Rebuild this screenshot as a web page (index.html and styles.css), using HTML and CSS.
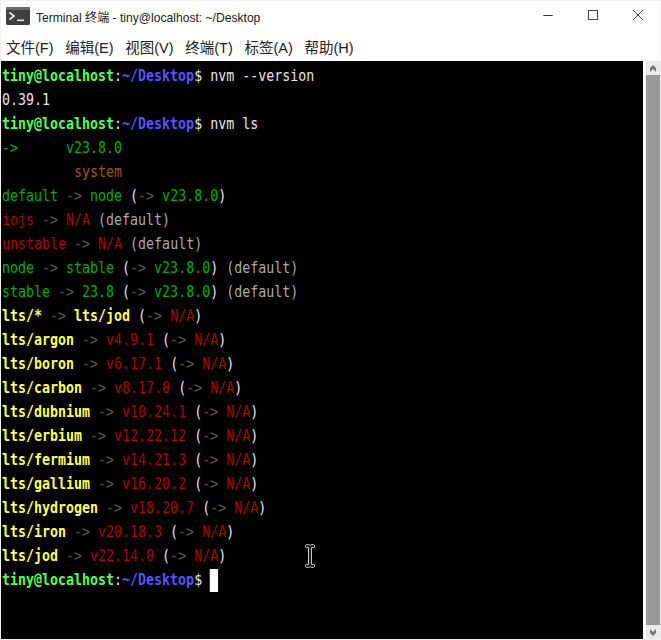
FILE: index.html
```html
<!DOCTYPE html>
<html lang="zh">
<head>
<meta charset="utf-8">
<title>Terminal 终端 - tiny@localhost: ~/Desktop</title>
<link rel="stylesheet" href="styles.css">
</head>
<body>
<div class="window">
  <header class="titlebar">
    <svg class="app-icon" width="24" height="18" viewBox="0 0 24 18">
      <rect width="24" height="18" rx="1.5" fill="#3f3f3f"/>
      <path d="M0 3V1.5A1.5 1.5 0 0 1 1.5 0H22.500A1.500 1.500 0 0 1 24 1.500V3z" fill="#6a6a6a"/>
      <path d="M3.500 5.500L8 9l-4.500 3.500" fill="none" stroke="#e4e4e4" stroke-width="1.800"/>
      <rect x="11" y="12.500" width="7" height="1.600" fill="#e4e4e4"/>
    </svg>
    <span class="title">Terminal 终端 - tiny@localhost: ~/Desktop</span>
    <div class="controls">
      <svg class="ctl" width="12" height="12" viewBox="0 0 12 12"><path d="M1.300 6.500h9.400" stroke="#333" stroke-width="1"/></svg>
      <svg class="ctl" width="12" height="12" viewBox="0 0 12 12"><rect x="1.500" y="1.500" width="9" height="9" fill="none" stroke="#444" stroke-width="1"/></svg>
      <svg class="ctl" width="12" height="12" viewBox="0 0 12 12"><path d="M1 1l10 10M11 1L1 11" stroke="#444" stroke-width="1"/></svg>
    </div>
  </header>
  <nav class="menubar">
    <span>文件(F)</span><span>编辑(E)</span><span>视图(V)</span><span>终端(T)</span><span>标签(A)</span><span>帮助(H)</span>
  </nav>
  <div class="body">
    <div class="term">
    <pre class="lines"><span class="pg">tiny@localhost</span>:<span class="pb">~/Desktop</span>$ nvm --version
0.39.1
<span class="pg">tiny@localhost</span>:<span class="pb">~/Desktop</span>$ nvm ls
<span class="g">-&gt;</span>      <span class="g">v23.8.0</span>
         <span class="o">system</span>
<span class="g">default</span> <span class="d">-&gt;</span> <span class="g">node</span> (<span class="d">-&gt;</span> <span class="g">v23.8.0</span>)
<span class="r">iojs</span> <span class="d">-&gt;</span> <span class="r">N/A</span> <span class="m">(default)</span>
<span class="r">unstable</span> <span class="d">-&gt;</span> <span class="r">N/A</span> <span class="m">(default)</span>
<span class="g">node</span> <span class="d">-&gt;</span> <span class="g">stable</span> (<span class="d">-&gt;</span> <span class="g">v23.8.0</span>) <span class="m">(default)</span>
<span class="g">stable</span> <span class="d">-&gt;</span> <span class="g">23.8</span> (<span class="d">-&gt;</span> <span class="g">v23.8.0</span>) <span class="m">(default)</span>
<span class="y">lts/*</span> <span class="d">-&gt;</span> <span class="y">lts/jod</span> (<span class="d">-&gt;</span> <span class="r">N/A</span>)
<span class="y">lts/argon</span> <span class="d">-&gt;</span> <span class="r">v4.9.1</span> (<span class="d">-&gt;</span> <span class="r">N/A</span>)
<span class="y">lts/boron</span> <span class="d">-&gt;</span> <span class="r">v6.17.1</span> (<span class="d">-&gt;</span> <span class="r">N/A</span>)
<span class="y">lts/carbon</span> <span class="d">-&gt;</span> <span class="r">v8.17.0</span> (<span class="d">-&gt;</span> <span class="r">N/A</span>)
<span class="y">lts/dubnium</span> <span class="d">-&gt;</span> <span class="r">v10.24.1</span> (<span class="d">-&gt;</span> <span class="r">N/A</span>)
<span class="y">lts/erbium</span> <span class="d">-&gt;</span> <span class="r">v12.22.12</span> (<span class="d">-&gt;</span> <span class="r">N/A</span>)
<span class="y">lts/fermium</span> <span class="d">-&gt;</span> <span class="r">v14.21.3</span> (<span class="d">-&gt;</span> <span class="r">N/A</span>)
<span class="y">lts/gallium</span> <span class="d">-&gt;</span> <span class="r">v16.20.2</span> (<span class="d">-&gt;</span> <span class="r">N/A</span>)
<span class="y">lts/hydrogen</span> <span class="d">-&gt;</span> <span class="r">v18.20.7</span> (<span class="d">-&gt;</span> <span class="r">N/A</span>)
<span class="y">lts/iron</span> <span class="d">-&gt;</span> <span class="r">v20.18.3</span> (<span class="d">-&gt;</span> <span class="r">N/A</span>)
<span class="y">lts/jod</span> <span class="d">-&gt;</span> <span class="r">v22.14.0</span> (<span class="d">-&gt;</span> <span class="r">N/A</span>)
<span class="pg">tiny@localhost</span>:<span class="pb">~/Desktop</span>$ <span class="cursor"></span></pre>
    </div>
    <svg class="ibeam" width="10" height="24" viewBox="0 0 10 24">
      <path d="M0.500 1.500L1.500 0.500H3.500L5 1.500L6.500 0.500H8.500L9.500 1.500V3L8.500 3.500H6.500V20.500H8.500L9.500 21V22.500L8.500 23.500H6.500L5 22.500L3.500 23.500H1.500L0.500 22.500V21L1.500 20.500H3.500V3.500H1.500L0.500 3z" fill="#1c1c1c" stroke="#c8c8c8" stroke-width="1"/>
    </svg>
    <div class="scrollbar">
      <div class="arrow"><svg width="8" height="7" viewBox="0 0 8 7"><path d="M4 0l3 3v4L4 4 1 7V3z" fill="#777"/></svg></div>
      <div class="thumb"></div>
      <div class="arrow"><svg width="8" height="7" viewBox="0 0 8 7"><path d="M4 7L1 4V0l3 3 3-3v4z" fill="#777"/></svg></div>
    </div>
  </div>
</div>
</body>
</html>
```
FILE: styles.css
```css
* { box-sizing: border-box; }
html, body { margin: 0; height: 100%; background: #fff; }
.window {
  width: 661px;
  height: 640px;
  display: flex;
  flex-direction: column;
  background: #fff;
  border: 1px solid #f0f0f0;
  font-family: "Liberation Sans", "Noto Sans CJK SC", sans-serif;
  color: #222;
}
.titlebar {
  height: 30px;
  display: flex;
  align-items: center;
  padding-left: 5px;
  flex: none;
}
.title { margin-left: 6px; font-size: 12.1px; margin-top: 1px; }
.controls { margin-left: auto; display: flex; gap: 33px; padding-right: 16px; margin-top: -2px; }
.ctl { display: block; }
.menubar {
  height: 30px;
  flex: none;
  display: flex;
  gap: 11.7px;
  align-items: center;
  padding: 1px 0 0 5px;
  font-size: 14.5px;
}
.body { flex: 1; display: flex; position: relative; min-height: 0; }
.term {
  flex: 1;
  min-width: 0;
  background: #000;
  overflow: hidden;
  padding: 3px 0 0 1px;
}
.lines {
  margin: 0;
  width: 772px;
  color: #e5e5e5;
  font-family: "DejaVu Sans Mono", monospace;
  font-size: 16px;
  line-height: 24px;
  transform: scaleX(0.831);
  transform-origin: left top;
}
.pg { color: #55ff55; font-weight: bold; }
.pb { color: #5555ff; font-weight: bold; }
.g { color: #00aa00; }
.o { color: #aa5500; }
.r { color: #aa0000; }
.y { color: #ffff55; font-weight: bold; }
.d { color: #555; }
.m { color: #aaa; }
.cursor { display: inline-block; width: 9.6px; height: 23px; background: #fff; vertical-align: top; margin-top: 1px; }
.ibeam { position: absolute; left: 304px; top: 483px; }
.scrollbar {
  width: 14px;
  margin-left: 3px;
  flex: none;
  display: flex;
  flex-direction: column;
  background: #999;
}
.arrow {
  height: 14px;
  background: #eaeaea;
  display: flex;
  align-items: center;
  justify-content: center;
}
.thumb { flex: 1; background: #999; }
```
